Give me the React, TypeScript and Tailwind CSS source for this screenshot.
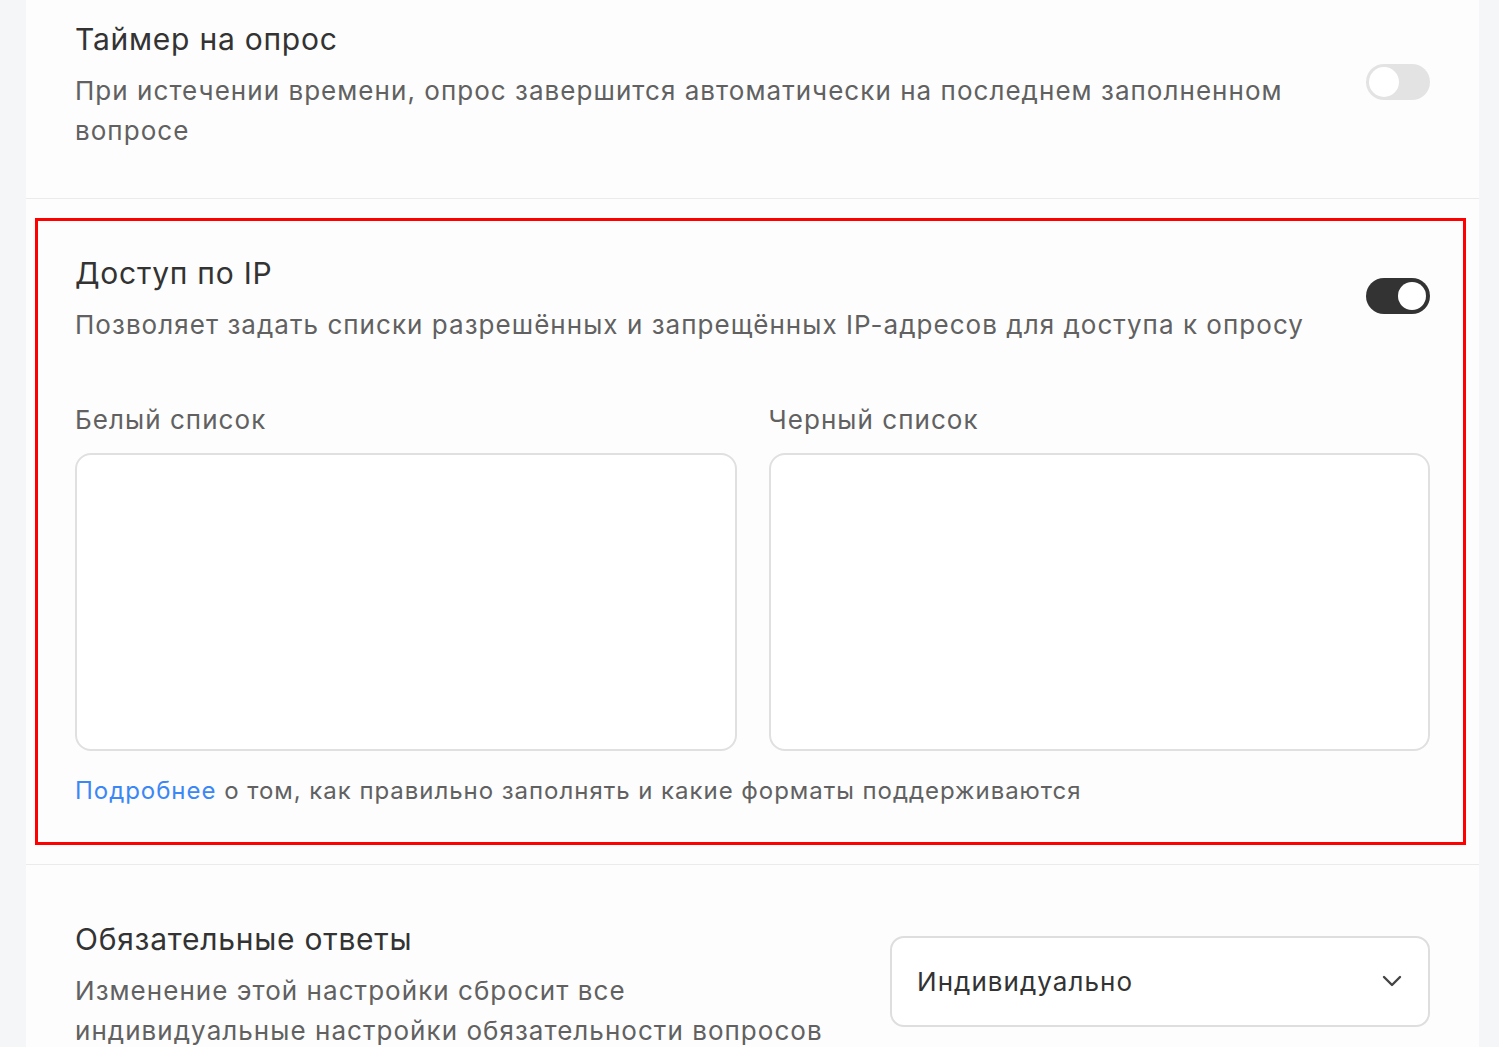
import React from "react";

function Toggle({ on }: { on: boolean }) {
  return on ? (
    <div className="flex h-[36px] w-[64px] shrink-0 items-center justify-end rounded-full bg-[#333333] pr-[4px]">
      <div className="h-[28px] w-[28px] rounded-full bg-white" />
    </div>
  ) : (
    <div className="flex h-[36px] w-[64px] shrink-0 items-center justify-start rounded-full bg-[#e3e3e3] pl-[3px]">
      <div className="h-[30px] w-[30px] rounded-full bg-white" />
    </div>
  );
}

export default function App() {
  const font = { fontFamily: "Inter, 'Noto Sans', sans-serif" };
  return (
    <div className="min-h-screen bg-[#f4f6f8] pl-[26px] pr-[20px]" style={font}>
      <div className="bg-[#fdfdfd]">
        {/* Section 1 */}
        <div className="flex items-center justify-between border-b border-[#ebebeb] px-[49px] pb-[47px] pt-[19px]">
          <div className="max-w-[1260px]">
            <div className="text-[30px] leading-[40px] tracking-[0.025em] text-[#333333]">Таймер на опрос</div>
            <div className="mt-[12px] text-[26px] leading-[40px] tracking-[0.04em] text-[#616161]">
              При истечении времени, опрос завершится автоматически на последнем заполненном
              <br />
              вопросе
            </div>
          </div>
          <div className="-mt-[6px]">
            <Toggle on={false} />
          </div>
        </div>

        {/* Section 2 */}
        <div className="relative border-b border-[#ebebeb] px-[49px] pb-[53px] pt-[54px]">
          <div className="pointer-events-none absolute left-[9px] right-[13px] top-[19px] bottom-[19px] border-[3px] border-[#ff0000]" />
          <div className="flex items-center justify-between">
            <div>
              <div className="text-[30px] leading-[40px] tracking-[0.025em] text-[#333333]">Доступ по IP</div>
              <div className="mt-[12px] text-[26px] leading-[40px] tracking-[0.04em] text-[#616161]">
                Позволяет задать списки разрешённых и запрещённых IP-адресов для доступа к опросу
              </div>
            </div>
            <div className="-mt-[6px]">
              <Toggle on={true} />
            </div>
          </div>
          <div className="mt-[55px] grid grid-cols-2 gap-[32px]">
            <div>
              <div className="text-[26px] leading-[40px] tracking-[0.04em] text-[#616161]">Белый список</div>
              <div className="mt-[13px] h-[298px] rounded-[16px] border-2 border-[#e0e0e0] bg-white" />
            </div>
            <div>
              <div className="text-[26px] leading-[40px] tracking-[0.04em] text-[#616161]">Черный список</div>
              <div className="mt-[13px] h-[298px] rounded-[16px] border-2 border-[#e0e0e0] bg-white" />
            </div>
          </div>
          <div className="mt-[20px] text-[24px] leading-[40px] tracking-[0.04em] text-[#616161]">
            <span className="text-[#3b87f5]">Подробнее</span> о том, как правильно заполнять и какие форматы поддерживаются
          </div>
        </div>

        {/* Section 3 */}
        <div className="flex items-center justify-between px-[49px] pb-[40px] pt-[54px]">
          <div className="max-w-[800px]">
            <div className="text-[30px] leading-[40px] tracking-[0.025em] text-[#333333]">Обязательные ответы</div>
            <div className="mt-[12px] text-[26px] leading-[40px] tracking-[0.04em] text-[#616161]">
              Изменение этой настройки сбросит все
              <br />
              индивидуальные настройки обязательности вопросов
            </div>
          </div>
          <div className="-mt-[8px] flex h-[91px] w-[540px] items-center justify-between rounded-[14px] border-2 border-[#dedede] bg-white pl-[25px] pr-[26px]">
            <span className="text-[26px] tracking-[0.04em] text-[#333333]">Индивидуально</span>
            <svg width="20" height="12" viewBox="0 0 20 12" fill="none">
              <path d="M2 2l8 8 8-8" stroke="#444" strokeWidth="2.4" strokeLinecap="round" strokeLinejoin="round" />
            </svg>
          </div>
        </div>
      </div>
    </div>
  );
}
